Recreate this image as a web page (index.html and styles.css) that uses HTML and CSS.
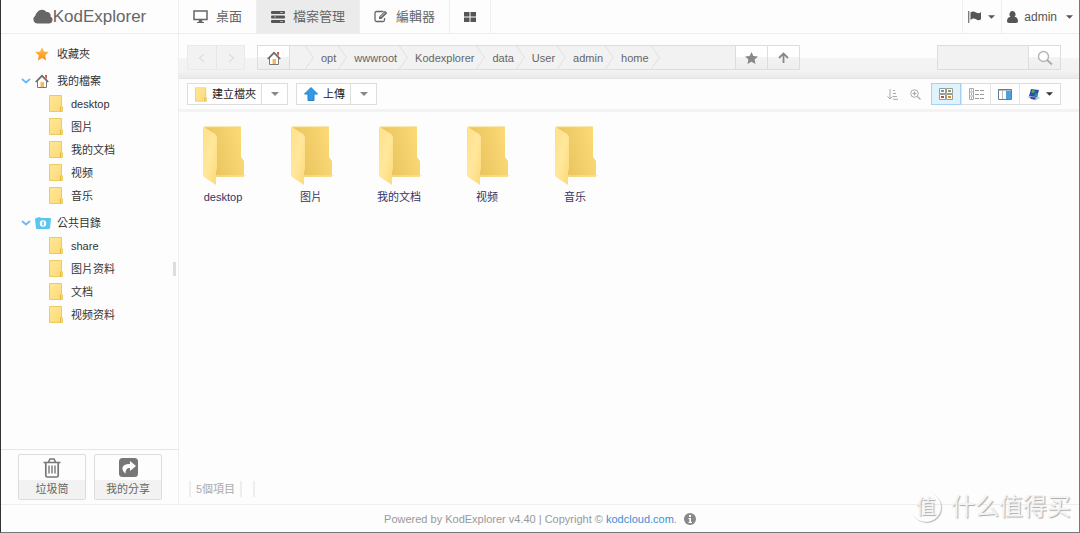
FILE: index.html
```html
<!DOCTYPE html>
<html lang="zh-Hant">
<head>
<meta charset="utf-8">
<title>KodExplorer</title>
<link rel="stylesheet" href="styles.css">
</head>
<body>
<svg class="defs" aria-hidden="true">
  <defs>
    <linearGradient id="gStar" x1="0" y1="0" x2="0" y2="1"><stop offset="0" stop-color="#ffc44a"/><stop offset="1" stop-color="#f98f1d"/></linearGradient>
    <linearGradient id="gFolder" x1="0" y1="0" x2="1" y2="1"><stop offset="0" stop-color="#ffe898"/><stop offset="1" stop-color="#fcd874"/></linearGradient>
    <linearGradient id="gBack" x1="0" y1="0.3" x2="1" y2="0"><stop offset="0" stop-color="#e9c35c"/><stop offset="1" stop-color="#fddc7a"/></linearGradient>
    <linearGradient id="gFront" x1="0" y1="0" x2="1" y2="1"><stop offset="0" stop-color="#ffe08a"/><stop offset="0.5" stop-color="#ffe79c"/><stop offset="1" stop-color="#fcd978"/></linearGradient>
  </defs>
  <symbol id="folder" viewBox="0 0 14 17"><path d="M.5.5h12v10.500l1 1v4.500H.5z" fill="url(#gFolder)" stroke="#eccb62"/><path d="M11.500 11.500v5" stroke="#e0b646" fill="none"/></symbol>
  <symbol id="bigfolder" viewBox="-4 0 48 60"><path d="M2 1h36v30l3 4v16H13z" fill="url(#gBack)"/><path d="M1 1h37" stroke="#f5d46d"/><path d="M13 50h28" stroke="#ffe79a"/><path d="M0 .5 12 8q2 2 2 4v30q0 2-1 3v14L1 51q-1-1-1-2z" fill="url(#gFront)"/><path d="M41 49l3 0-3 1z" fill="#e8e8e8"/></symbol>
  <symbol id="house" viewBox="0 0 14 14"><path d="M10 1h2v4l-2-2z" fill="#d9574a"/><path d="M2.500 7v6.500h9V7L7 2.500z" fill="#fff" stroke="#777"/><path d="M5.500 8h3.500v5H5.500z" fill="#f5b95c"/><path d="M.7 8 7 1.500 13.300 8" fill="none" stroke="#666" stroke-width="1.400"/></symbol>
  <symbol id="chev" viewBox="0 0 10 6"><path d="M1 1l4 3.500L9 1" fill="none" stroke="#6fb6f5" stroke-width="1.700"/></symbol>
  <symbol id="caret" viewBox="0 0 8 4"><path d="M0 0h8L4 4z" fill="currentColor"/></symbol>
</svg>

<div class="app">
  <header class="top">
    <a class="logo" href="#"><svg width="20" height="15" viewBox="0 0 20 15"><path d="M4.500 14.500A4.200 4.200 0 0 1 2.300 6.800 4.800 4.800 0 0 1 4 3.500 5.800 5.800 0 0 1 13.500 3a3.600 3.600 0 0 1 4 4.500 3.700 3.700 0 0 1-1.500 7z" fill="#666"/></svg>KodExplorer</a>
    <nav class="tabs">
      <a class="tab" href="#"><svg width="15" height="13" viewBox="0 0 15 13"><path d="M1 1h13v8.500H1z" fill="#fff" stroke="#666" stroke-width="1.500"/><path d="M6 10h3l.5 2H11v1H4v-1h1.500z" fill="#666"/></svg>桌面</a>
      <a class="tab on" href="#"><svg width="14" height="12" viewBox="0 0 14 12"><rect width="14" height="3" rx="1" fill="#555"/><rect y="4.500" width="14" height="3" rx="1" fill="#555"/><rect y="9" width="14" height="3" rx="1" fill="#555"/><path d="M9 1.500h3M3 6h2M9 10.500h3" stroke="#aaa"/></svg>檔案管理</a>
      <a class="tab" href="#"><svg width="14" height="13" viewBox="0 0 14 13"><path d="M9.500 1.500h-7a1.500 1.500 0 0 0-1.500 1.500v7a1.500 1.500 0 0 0 1.500 1.500h6.500a1.500 1.500 0 0 0 1.500-1.500V8" fill="none" stroke="#666" stroke-width="1.300"/><path d="M5 9V6.700L11 .7 13.300 3l-6 6z" fill="#666"/><path d="M6.500 7l4.500-4.500" stroke="#fdfdfd" stroke-width=".7"/></svg>編輯器</a>
      <a class="tab apps" href="#" aria-label="應用"><svg width="12" height="10" viewBox="0 0 12 10"><path d="M0 0h5.500v4.500H0zM6.500 0H12v4.500H6.500zM0 5.500h5.500V10H0zM6.500 5.500H12V10H6.500z" fill="#555"/></svg></a>
    </nav>
    <div class="user">
      <button class="ubtn lang" aria-label="語言"><svg width="14" height="12" viewBox="0 0 14 12"><path d="M.7 0v12" stroke="#777" stroke-width="1.300"/><path d="M2.500 1.500Q5-.3 8 1.500t5-.5v7.300Q10.500 10 8 8.300T2.500 9z" fill="#555"/></svg><svg width="7" height="4"><use href="#caret"/></svg></button>
      <button class="ubtn"><svg width="11" height="12" viewBox="0 0 11 12"><path d="M5.500 0a3 3.300 0 0 1 2 5.800C10 6.300 11 8 11 10.300Q11 12 9 12H2Q0 12 0 10.300C0 8 1 6.300 3.500 5.800a3 3.300 0 0 1 2-5.800z" fill="#555"/></svg><span class="name">admin</span><svg width="7" height="4"><use href="#caret"/></svg></button>
    </div>
  </header>

  <div class="body">
    <aside class="side">
      <ul class="tree">
        <li class="row root"><svg class="lead" width="10" height="6"></svg><svg width="14" height="14" viewBox="0 0 14 14"><path d="M7 .3l2 4.300 4.700.5-3.500 3.300 1 5L7 11l-4.200 2.400 1-5L.3 5.100 5 4.600z" fill="url(#gStar)"/></svg><span class="txt">收藏夾</span></li>
        <li class="row root"><svg class="lead" width="10" height="6"><use href="#chev"/></svg><svg width="14" height="14"><use href="#house"/></svg><span class="txt">我的檔案</span></li>
        <li class="row"><svg width="14" height="17"><use href="#folder"/></svg>desktop</li>
        <li class="row"><svg width="14" height="17"><use href="#folder"/></svg>图片</li>
        <li class="row"><svg width="14" height="17"><use href="#folder"/></svg>我的文档</li>
        <li class="row"><svg width="14" height="17"><use href="#folder"/></svg>视频</li>
        <li class="row"><svg width="14" height="17"><use href="#folder"/></svg>音乐</li>
        <li class="row root"><svg class="lead" width="10" height="6"><use href="#chev"/></svg><svg class="wide" width="16" height="12" viewBox="0 0 16 12"><path d="M1 1l4-1 1 1h9q1 0 1 1l-1 9q0 1-1 1H2q-1 0-1-1L0 2z" fill="#5cc4f0"/><circle cx="8" cy="6.500" r="3.200" fill="#fff"/><path d="M8 4.500v4" stroke="#5cc4f0" stroke-width="1.600"/></svg><span class="txt">公共目錄</span></li>
        <li class="row"><svg width="14" height="17"><use href="#folder"/></svg>share</li>
        <li class="row"><svg width="14" height="17"><use href="#folder"/></svg>图片资料</li>
        <li class="row"><svg width="14" height="17"><use href="#folder"/></svg>文档</li>
        <li class="row"><svg width="14" height="17"><use href="#folder"/></svg>视频资料</li>
      </ul>
      <div class="grip"></div>
      <div class="sidefoot">
        <button class="big"><span class="pic"><svg width="18" height="20" viewBox="0 0 18 20"><path d="M.5 4.500h17M5.500 4l1.500-3h4l1.500 3" fill="none" stroke="#777" stroke-width="1.600"/><path d="M2.800 5v12.500q0 1.500 1.500 1.500h9.400q1.500 0 1.500-1.500V5" fill="none" stroke="#777" stroke-width="1.700"/><path d="M6 7.500v8M9 7.500v8M12 7.500v8" stroke="#777" stroke-width="1.400"/></svg></span><span class="cap">垃圾筒</span></button>
        <button class="big"><span class="pic"><svg width="19" height="19" viewBox="0 0 19 19"><rect width="19" height="19" rx="3.500" fill="#777"/><path d="M11 3l6 5-6 5v-3Q6.500 9.500 6.500 15.500 3 13 3.500 9.500 4.500 5.800 11 6z" fill="#fff"/></svg></span><span class="cap">我的分享</span></button>
      </div>
    </aside>

    <main class="main">
      <div class="address">
        <div class="history">
          <button class="hist" aria-label="後退"><svg width="14" height="10" viewBox="0 0 14 10"><path d="M9 1L4.500 5 9 9" fill="none" stroke="#dedede" stroke-width="1.200"/></svg></button>
          <button class="hist" aria-label="前進"><svg width="14" height="10" viewBox="0 0 14 10"><path d="M5 1l4.500 4L5 9" fill="none" stroke="#dedede" stroke-width="1.200"/></svg></button>
        </div>
        <div class="path">
          <button class="sq" aria-label="主目錄"><svg width="14" height="14"><use href="#house"/></svg></button>
          <div class="crumbs">
            <a class="crumb first" href="#" aria-label="根目錄"></a><a class="crumb" href="#">opt</a><a class="crumb" href="#">wwwroot</a><a class="crumb" href="#">Kodexplorer</a><a class="crumb" href="#">data</a><a class="crumb" href="#">User</a><a class="crumb" href="#">admin</a><a class="crumb" href="#">home</a>
          </div>
          <button class="sq" aria-label="收藏"><svg width="13" height="12" viewBox="0 0 13 12"><path d="M6.500 0l1.900 4 4.600.5-3.400 3 .9 4.500-4-2.200L2.500 12l.9-4.500L0 4.500 4.600 4z" fill="#888"/></svg></button>
          <button class="sq" aria-label="上層"><svg width="11" height="11" viewBox="0 0 11 11"><path d="M5.500 11V1.500M1 6l4.500-4.500L10 6" fill="none" stroke="#888" stroke-width="1.800"/></svg></button>
        </div>
        <div class="search">
          <input type="text" aria-label="搜尋">
          <button class="sq" aria-label="搜尋"><svg width="16" height="16" viewBox="0 0 16 16"><circle cx="6.500" cy="6.500" r="5" fill="#fff" stroke="#b5b5b5" stroke-width="1.400"/><path d="M10 10l5 4.500" stroke="#aaa" stroke-width="1.800"/></svg></button>
        </div>
      </div>

      <div class="tools">
        <div class="group">
          <button class="act new"><svg width="12" height="15" viewBox="0 0 14 17"><use href="#folder"/></svg>建立檔夾</button><button class="drop" aria-label="更多新建"><svg width="8" height="4"><use href="#caret"/></svg></button>
        </div>
        <div class="group">
          <button class="act up"><svg width="14" height="14" viewBox="0 0 14 14"><path d="M7 .5l6.500 6.500H10v6.500H4V7H.5z" fill="#2f9ae8" stroke="#2580c8"/></svg>上傳</button><button class="drop" aria-label="更多上傳"><svg width="8" height="4"><use href="#caret"/></svg></button>
        </div>
        <div class="views">
          <button class="plain" aria-label="排序"><svg width="11" height="11" viewBox="0 0 11 11"><path d="M3 0v10M.5 7.500L3 10l2.500-2.500M6 1.500h2M6 4.500h3M6 7.500h4M6 10.300h5" fill="none" stroke="#aaa"/></svg></button>
          <button class="plain" aria-label="縮放"><svg width="11" height="11" viewBox="0 0 11 11"><circle cx="4.500" cy="4.500" r="3.800" fill="none" stroke="#aaa"/><path d="M2.500 4.500h4M4.500 2.500v4M7.500 7.500L10.500 10.500" stroke="#aaa" stroke-width="1.200"/></svg></button>
          <div class="group">
            <button class="view on" aria-label="圖示"><svg width="14" height="12" viewBox="0 0 14 12"><path d="M.5.5h6v5h-6zM7.500.5h6v5h-6zM.5 6.500h6v5h-6zM7.500 6.500h6v5h-6z" fill="#fff" stroke="#999"/><path d="M2 2h3v2H2z" fill="#579ed0"/><path d="M9 2h3v2H9z" fill="#78a84c"/><path d="M2 8h3v2H2z" fill="#c64b30"/><path d="M9 8h3v2H9z" fill="#d58c24"/></svg></button>
            <button class="view" aria-label="列表"><svg width="15" height="12" viewBox="0 0 15 12"><path d="M.5.500h4v11h-4zM.5 4h4M.5 8h4" fill="#fff" stroke="#aaa"/><path d="M2 2h1" stroke="#579ed0"/><path d="M2 6h1M2 10h1" stroke="#c64b30"/><path d="M6 2.500h4M11 2.500h4M6 6.500h4M11 6.500h4M6 10.500h4M11 10.500h4" stroke="#999"/></svg></button>
            <button class="view" aria-label="分欄"><svg width="14" height="11" viewBox="0 0 14 11"><path d="M.5.5h13v10H.5z" fill="#fff" stroke="#6b7a86"/><path d="M0 1h14" stroke="#6b7a86"/><path d="M8 2h5v8H8z" fill="#48a2e2"/><path d="M4.500 2v8" stroke="#bbb"/></svg></button>
            <button class="view theme" aria-label="主題"><svg width="13" height="13" viewBox="0 0 13 13"><path d="M0 9l3-1 7 0 3 2-5 2.500z" fill="#a8c8e8"/><path d="M4 1l8 1-2 7-8-1z" fill="#2b4fae"/><path d="M5 2l3 .5L7 5 4.500 4.500z" fill="#4db84a"/><path d="M8 5l3 .5-1 3-2.500-.5z" fill="#1d9a87"/><path d="M3 9l6 .5-1 2-4-.5z" fill="#4b3a7c"/></svg><svg width="7" height="4"><use href="#caret"/></svg></button>
          </div>
        </div>
      </div>

      <div class="files">
        <button class="file"><svg width="48" height="60"><use href="#bigfolder"/></svg>desktop</button>
        <button class="file"><svg width="48" height="60"><use href="#bigfolder"/></svg>图片</button>
        <button class="file"><svg width="48" height="60"><use href="#bigfolder"/></svg>我的文档</button>
        <button class="file"><svg width="48" height="60"><use href="#bigfolder"/></svg>视频</button>
        <button class="file"><svg width="48" height="60"><use href="#bigfolder"/></svg>音乐</button>
      </div>
      <div class="status"><span class="count">5個項目</span><span class="sep"></span></div>
    </main>
  </div>

  <footer class="foot">
    <span>Powered by KodExplorer v4.40 | Copyright © <a href="#">kodcloud.com</a>.</span>
    <svg width="12" height="12" viewBox="0 0 12 12"><circle cx="6" cy="6" r="6" fill="#888"/><path d="M5 2h2v2H5zM4.500 5H7v4h1v1H4.500V9h.8V6h-.8z" fill="#fff"/></svg>
  </footer>
  <div class="mark"><span class="seal">值</span>什么值得买</div>
</div>
</body>
</html>
```
FILE: styles.css
```css
* { box-sizing: border-box; }
body {
  margin: 0;
  font: 11px/16px "Liberation Sans", "Noto Sans CJK SC", sans-serif;
  color: #333;
  background: #fdfdfd;
}
button, input { font: inherit; color: inherit; margin: 0; padding: 0; border: 0; background: none; }
button { display: flex; align-items: center; justify-content: center; }
a { color: inherit; text-decoration: none; }
svg { display: block; flex: none; }
.defs { position: absolute; width: 0; height: 0; }

.app {
  position: relative;
  display: flex;
  flex-direction: column;
  height: 100vh;
  border: solid #777;
  border-width: 0 1px 1px;
  border-left-color: #333;
}

.top { display: flex; flex: none; height: 34px; border-bottom: 1px solid #eee; color: #666; }
.logo {
  display: flex;
  align-items: center;
  justify-content: center;
  width: 178px;
  border-right: 1px solid #eee;
  font-size: 17px;
}
.tabs { display: flex; font-size: 13px; font-family: "Liberation Sans", "Noto Sans CJK TC", sans-serif; }
.tab { display: flex; align-items: center; gap: 8px; padding: 0 14px; border-right: 1px solid #eee; }
.tab.on { background: #ebebeb; }
.user { display: flex; margin-left: auto; }
.ubtn { gap: 6px; padding: 0 6px 0 5px; border-left: 1px solid #eee; font-size: 12px; color: #555; }
.name { padding-right: 3px; }

.body { display: flex; flex: 1; min-height: 0; }
.side { position: relative; display: flex; flex-direction: column; width: 178px; flex: none; border-right: 1px solid #eee; }
.tree { flex: 1; margin: 0; padding: 4px 0 0; list-style: none; overflow: hidden; }
.row { display: flex; align-items: center; gap: 8px; height: 23px; padding-left: 48px; }
.root { gap: 4px; margin-top: 4px; padding-left: 20px; }
.txt { padding-left: 4px; }
.wide + .txt { padding-left: 2px; }
.grip { position: absolute; right: 2px; top: 228px; width: 3px; height: 14px; background: #ddd; }
.sidefoot { display: flex; gap: 8px; padding: 4px 16px 4px 17px; border-top: 1px solid #e6e6e6; }
.big {
  flex: 1;
  flex-direction: column;
  align-items: stretch;
  border: 1px solid #ddd;
  border-radius: 2px;
  overflow: hidden;
  color: #666;
}
.pic { display: flex; align-items: center; justify-content: center; height: 25px; }
.cap { height: 19px; line-height: 19px; background: #f2f2f2; }

.main { display: flex; flex-direction: column; flex: 1; min-width: 0; }
.address {
  display: flex;
  gap: 12px;
  padding: 11px 18px 8px 8px;
  border-bottom: 1px solid #e4e4e4;
  background: linear-gradient(#fdfdfd 24px, #f4f4f4 24px, #f3f3f3 37px, #ebebeb 43px);
}
.history, .path, .search { display: flex; height: 25px; border: 1px solid #ddd; background: #f2f2f2; }
.history { border-color: #eaeaea; }
.hist { width: 28px; }
.hist + .hist { border-left: 1px solid #e6e6e6; }
.path { flex: 0 1 543px; min-width: 0; }
.crumbs { display: flex; flex: 1; min-width: 0; overflow: hidden; color: #666; }
.crumb { display: flex; align-items: center; padding-left: 7px; }
.crumb::after {
  content: "";
  width: 16px;
  height: 16px;
  margin-left: -6px;
  border: solid #e0e0e0;
  border-width: 1px 1px 0 0;
  transform: scaleX(0.7) rotate(45deg);
}
.first { padding-left: 13px; }
.sq { width: 32px; flex: none; background: linear-gradient(#fff 50%, #f3f3f3 50%, #eee); border-left: 1px solid #ddd; }
.sq:first-child { border-left: 0; border-right: 1px solid #ddd; }
.search { width: 124px; margin-left: auto; }
.search input { flex: 1; min-width: 0; padding: 0 6px; }

.tools { display: flex; gap: 8px; padding: 4px 18px 4px 8px; border-bottom: 3px solid #f3f3f3; }
.group { display: flex; height: 22px; border: 1px solid #ddd; background: #fff; }
.act { gap: 5px; padding: 0 5px 0 7px; color: #222; }
.drop { width: 26px; border-left: 1px solid #ddd; color: #888; }
.views { display: flex; gap: 12px; margin-left: auto; }
.plain + .group { margin-left: -2px; }
.view { width: 29px; border-left: 1px solid #e4e4e4; }
.view.on { width: 30px; margin: -1px 0 -1px -1px; border: 1px solid #a5d2f2; background: #e0f3fd; }
.theme { width: 41px; gap: 6px; }

.files { display: flex; flex-wrap: wrap; flex: 1; align-content: flex-start; padding-top: 14px; }
.file { flex-direction: column; gap: 3px; width: 88px; color: #336; }
.status { display: flex; gap: 11px; padding: 0 10px 7px; color: #aaa; }
.count { padding: 0 5px; border: solid #eee; border-width: 0 2px; }
.sep { border-left: 2px solid #eee; }

.foot {
  display: flex;
  align-items: center;
  justify-content: center;
  gap: 7px;
  flex: none;
  height: 28px;
  border-top: 1px solid #eee;
  color: #999;
}
.foot a { color: #3c8fd6; }

.mark {
  position: absolute;
  right: 8px;
  bottom: 10px;
  display: flex;
  align-items: center;
  gap: 10px;
  font-size: 24px;
  line-height: 30px;
  color: #f4f4f4;
  text-shadow: 1px 1px 1px #aaa;
}
.seal {
  width: 30px;
  height: 30px;
  border-radius: 50%;
  box-shadow: 1px 1px 1px #bbb;
  font-size: 20px;
  text-align: center;
}
```
